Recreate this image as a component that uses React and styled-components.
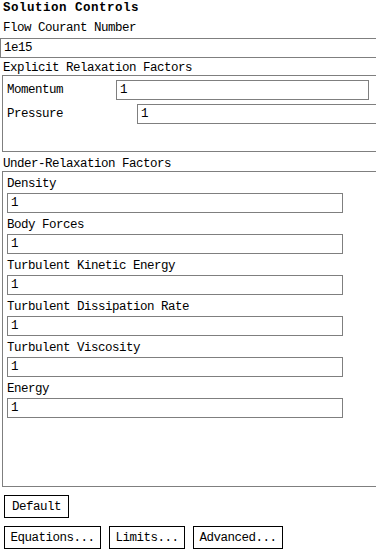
import React from "react";
import styled, { createGlobalStyle } from "styled-components";

const Global = createGlobalStyle`
  html, body {
    margin: 0;
    padding: 0;
    background: #ffffff;
    overflow: hidden;
  }
  body {
    font-family: "Liberation Mono", "DejaVu Sans Mono", monospace;
    font-size: 12.5px;
    color: #000000;
  }
`;

const Page = styled.div`
  width: 400px;
  display: flex;
  flex-direction: column;
  font-family: "Liberation Mono", "DejaVu Sans Mono", monospace;
  font-size: 12.5px;
  letter-spacing: -0.5px;
  color: #000;
`;

const Title = styled.div`
  height: 17px;
  line-height: 17px;
  padding-left: 3px;
  font-weight: bold;
  letter-spacing: 0.5px;
`;

const Label = styled.div`
  box-sizing: border-box;
  height: ${(p) => p.$h || 18}px;
  line-height: ${(p) => p.$lh || 18}px;
  padding-top: ${(p) => p.$pt || 0}px;
  padding-left: ${(p) => p.$pad ?? 3}px;
  margin-top: ${(p) => p.$mt || 0}px;
  white-space: nowrap;
`;

const Field = styled.input`
  box-sizing: border-box;
  height: 20px;
  width: ${(p) => p.$w}px;
  margin: ${(p) => p.$m || "0"};
  padding: 0 3px;
  border: 1px solid #7f7f7f;
  background: #fff;
  font-family: inherit;
  font-size: 12.5px;
  letter-spacing: -0.5px;
  color: #000;
  outline: none;
  flex: none;
`;

const Group = styled.div`
  box-sizing: border-box;
  margin-left: 2px;
  width: 396px;
  height: ${(p) => p.$h}px;
  border: 1px solid #7f7f7f;
  padding: ${(p) => p.$pad};
  display: flex;
  flex-direction: column;
`;

const Row = styled.div`
  display: flex;
  align-items: center;
  height: 20px;
  margin-bottom: 4px;
`;

const RowLabel = styled.span`
  width: ${(p) => p.$w}px;
  flex: none;
  white-space: nowrap;
`;

const Item = styled.div`
  display: flex;
  flex-direction: column;
  margin-bottom: 3px;
`;

const ButtonBar = styled.div`
  display: flex;
  gap: 8px;
  padding-left: 4px;
  margin-top: ${(p) => p.$mt}px;
`;

const Button = styled.button`
  box-sizing: border-box;
  height: 23px;
  padding: 0 ${(p) => p.$px}px;
  border: 1px solid #000;
  background: #fff;
  font-family: inherit;
  font-size: 12.5px;
  letter-spacing: -0.5px;
  color: #000;
  border-radius: 0;
  cursor: pointer;
`;

const under = [
  "Density",
  "Body Forces",
  "Turbulent Kinetic Energy",
  "Turbulent Dissipation Rate",
  "Turbulent Viscosity",
  "Energy",
];

export default function App() {
  return (
    <>
      <Global />
      <Page>
        <Title>Solution Controls</Title>
        <Label $mt={2} $lh={19}>Flow Courant Number</Label>
        <Field $w={400} $m="1px 0 0 0" defaultValue="1e15" />
        <Label $h={17} $lh={14} $pt={3}>Explicit Relaxation Factors</Label>
        <Group $h={77} $pad="4px 0 0 4px">
          <Row>
            <RowLabel $w={109}>Momentum</RowLabel>
            <Field $w={253} defaultValue="1" />
          </Row>
          <Row>
            <RowLabel $w={130}>Pressure</RowLabel>
            <Field $w={253} defaultValue="1" />
          </Row>
        </Group>
        <Label $h={19} $lh={14} $pt={5}>Under-Relaxation Factors</Label>
        <Group $h={316} $pad="3px 0 0 4px">
          {under.map((name) => (
            <Item key={name}>
              <Label $pad={0} $lh={19}>{name}</Label>
              <Field $w={336} defaultValue="1" />
            </Item>
          ))}
        </Group>
        <ButtonBar $mt={8}>
          <Button $px={7}>Default</Button>
        </ButtonBar>
        <ButtonBar $mt={8}>
          <Button $px={5.5}>Equations...</Button>
          <Button $px={5.5}>Limits...</Button>
          <Button $px={5.5}>Advanced...</Button>
        </ButtonBar>
      </Page>
    </>
  );
}
